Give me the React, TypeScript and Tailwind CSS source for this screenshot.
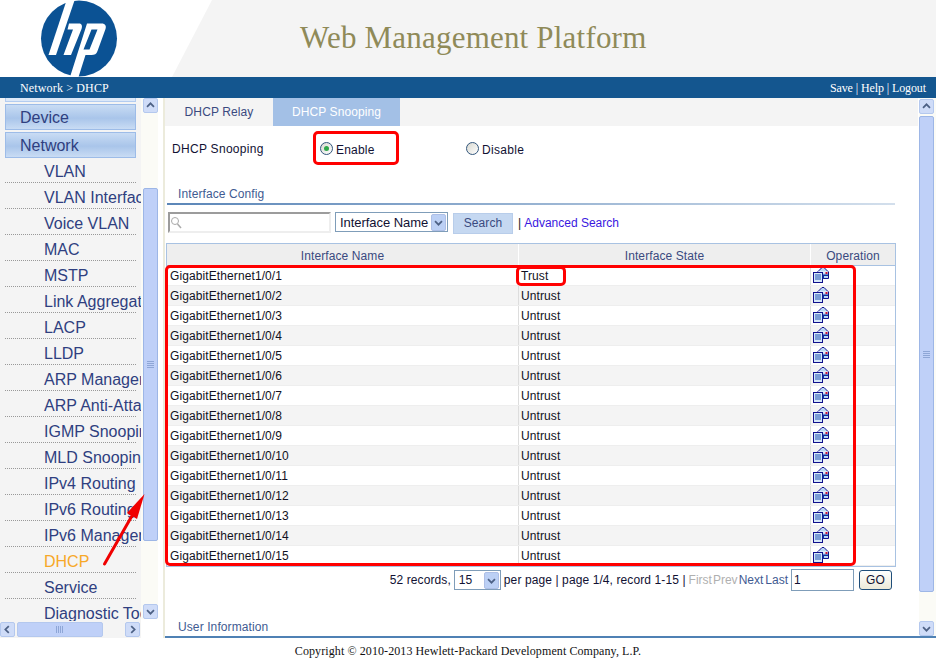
import React from "react";

const sideItems = ["VLAN","VLAN Interface","Voice VLAN","MAC","MSTP","Link Aggregation","LACP","LLDP","ARP Management","ARP Anti-Attack","IGMP Snooping","MLD Snooping","IPv4 Routing","IPv6 Routing","IPv6 Management","DHCP","Service","Diagnostic Tools"];

function Chevron({ dir, size = 15 }: { dir: "up" | "down" | "left" | "right"; size?: number }) {
  const rot = { up: 0, down: 180, left: 270, right: 90 }[dir];
  return (
    <svg width={size} height={size} viewBox="0 0 15 15" style={{ transform: `rotate(${rot}deg)` }}>
      <path d="M3.5 9 L7.5 5 L11.5 9" fill="none" stroke="#4d6185" strokeWidth="2" />
    </svg>
  );
}

function ScrollBtn({ dir }: { dir: "up" | "down" | "left" | "right" }) {
  return (
    <div className="w-[15px] h-[15px] shrink-0 flex items-center justify-center rounded-[2px] border border-[#b4c8ee] bg-[#cfdcf8]">
      <Chevron dir={dir} size={13} />
    </div>
  );
}

function Grip({ vertical }: { vertical?: boolean }) {
  return (
    <div className={vertical ? "flex flex-col gap-px" : "flex gap-px"}>
      {[0, 1, 2, 3].map((i) => (
        <div key={i} className={vertical ? "w-[7px] h-px bg-[#8ea6d6]" : "w-px h-[7px] bg-[#8ea6d6]"} />
      ))}
    </div>
  );
}

function OpIcon() {
  return (
    <svg width="17" height="17" viewBox="0 0 17 17" className="block">
      <path d="M4.5 6 L9 1.5 H11 L15.5 6 V12.5 H4.5 Z" fill="#bcd8f5" stroke="#10108c" strokeWidth="1" />
      <path d="M5 6 H15" stroke="#ffffff" strokeWidth="1" />
      <rect x="0.5" y="6.5" width="9" height="10" fill="#d6e8fa" stroke="#10108c" />
      <path d="M2 9 H8 M2 11 H8 M2 13 H8" stroke="#1f50b0" strokeWidth="1" />
      <path d="M9.5 8.5 H15 V10 H11 V13 H9.5 Z" fill="#0d2f9c" />
      <rect x="12.5" y="6" width="2" height="2" fill="#d01030" />
    </svg>
  );
}

function Radio({ on }: { on?: boolean }) {
  return (
    <div className="w-[13px] h-[13px] rounded-full border border-[#32567c] bg-[linear-gradient(135deg,#d8d8d0,#ffffff)] flex items-center justify-center">
      {on && <div className="w-[5px] h-[5px] rounded-full bg-[#2fa84a]" />}
    </div>
  );
}

function SelectArrow() {
  return (
    <div className="w-[15px] h-[17px] rounded-[2px] bg-[#bcd0f5] border border-[#aebfe6] flex items-center justify-center">
      <Chevron dir="down" size={13} />
    </div>
  );
}

export default function App() {
  const rows = Array.from({ length: 15 }, (_, i) => i + 1);
  return (
    <div className="relative w-[936px] h-[664px] overflow-hidden bg-white flex flex-col font-['Liberation_Sans',Arial,sans-serif] text-[12px] tracking-[0.1px] text-[#111133]">
      {/* header */}
      <header className="relative h-[77px] shrink-0 bg-white flex items-start">
        <div className="absolute inset-0 bg-[#f4f4f4] [clip-path:polygon(212px_0,100%_0,100%_100%,172px_100%)]" />
        <svg width="100" height="77" viewBox="0 0 100 77" className="relative ml-[29px] shrink-0">
          <circle cx="50" cy="38.5" r="38" fill="#0b5294" />
          <path fill="#fff" d="M38 -1 H46 L27 55 H19.5 Z" />
          <path fill="#fff" d="M40 23.5 H50 C53 23.5 53.5 26 52.5 29 L42 55 H34.5 L44 29.5 H38.5 Z" />
          <path fill="#fff" fillRule="evenodd" d="M58 23.5 H72.5 C76.5 23.5 77.5 26 76.5 29 L68.5 51 C67.5 54 65.5 55 62.5 55 H56.5 L49.5 77 H41 Z M62.5 29.5 L54.5 49.5 H60.5 L68.5 29.5 Z" />
        </svg>
        <h1 className="relative ml-[171px] mt-[16px] font-['Liberation_Serif',serif] font-normal text-[31px] leading-[44px] tracking-[0.2px] text-[#8f8a58] whitespace-nowrap">
          Web Management Platform
        </h1>
      </header>

      {/* breadcrumb bar */}
      <div className="h-[21px] shrink-0 bg-[#14568f] flex items-center justify-between pl-[20px] pr-[10px] font-['Liberation_Serif',serif] text-[12px] text-white">
        <span className="tracking-[0.15px]">Network &gt; DHCP</span>
        <span className="tracking-[-0.1px]">Save | Help | Logout</span>
      </div>

      {/* body */}
      <div className="flex h-[540px] shrink-0">
        {/* sidebar */}
        <aside className="w-[141px] shrink-0 bg-[#f4f4f4] flex flex-col">
          <div className="h-[523px] overflow-hidden pl-[5px] text-[16px] tracking-[0px] text-[#2f3f80] whitespace-nowrap">
            <div className="w-[131px] h-[4px] border border-t-0 border-[#b3ccf0] bg-[#dce8f8]" />
            <div className="w-[131px] mt-[2px] h-[26px] border border-[#9dbce8] bg-[linear-gradient(#c9dcf4,#a9c5ea_55%,#c9dcf4)] pl-[14px] leading-[26px]">Device</div>
            <div className="w-[131px] mt-[2px] h-[26px] border border-[#9dbce8] bg-[linear-gradient(#c9dcf4,#a9c5ea_55%,#c9dcf4)] pl-[14px] leading-[26px]">Network</div>
            <div className="-mt-px">
              {sideItems.map((t) => (
                <div key={t} className={`w-[131px] h-[26px] border-b border-dotted border-[#999] pl-[39px] leading-[30px] ${t === "DHCP" ? "text-[#f7a828]" : ""}`}>
                  {t}
                </div>
              ))}
            </div>
          </div>
          <div className="h-[16px] flex items-center justify-between pr-px">
            <ScrollBtn dir="left" />
            <div className="w-[86px] h-[15px] mr-[21px] rounded-[2px] border border-[#b4c8ee] bg-[#bfd0f8] flex items-center justify-center"><Grip /></div>
            <ScrollBtn dir="right" />
          </div>
        </aside>

        {/* sidebar scrollbar */}
        <div className="w-[24px] shrink-0 flex">
          <div className="w-[17px] h-[521px] bg-[#fbfbf6] flex flex-col items-center pl-px">
            <ScrollBtn dir="up" />
            <div className="mt-[75px] w-[15px] h-[353px] rounded-[2px] border border-[#9db6e6] bg-[#bfd0f8] flex items-center justify-center"><Grip vertical /></div>
            <div className="flex-1" />
            <ScrollBtn dir="down" />
          </div>
          <div className="w-[5px] bg-white" />
          <div className="w-[2px] bg-[#ecebdc]" />
        </div>

        {/* main */}
        <main className="flex-1 min-w-0 flex border-b-2 border-[#4f81b4]">
          <div className="w-[753px] h-[538px] overflow-hidden">
            <div className="h-[28px] bg-[#f4f4f4] flex items-stretch">
              <div className="w-[108px] flex items-center justify-center text-[#3a4a80]">DHCP Relay</div>
              <div className="w-[127px] bg-[#a3c0e6] flex items-center justify-center text-white">DHCP Snooping</div>
            </div>
            <div className="h-[50px] flex items-start">
              <span className="ml-[7px] mt-[14px] w-[148px] tracking-[0.3px]">DHCP Snooping</span>
              <div className="mt-[16px] w-[146px] flex items-start gap-[3px]">
                <Radio on />
                <span className="mt-[-1px] tracking-[0.2px]">Enable</span>
              </div>
              <div className="mt-[16px] flex items-start gap-[3px]">
                <Radio />
                <span className="mt-[-1px] tracking-[0.3px]">Disable</span>
              </div>
            </div>
            <div className="ml-[13px] mt-[11px] h-[15px] leading-[15px] text-[#3f5b92]">Interface Config</div>
            <div className="ml-[2px] mt-[1px] w-[728px] h-[2px] bg-[linear-gradient(90deg,#5b86b8,#d3dfec)]" />

            <div className="ml-[3px] mt-[5px] h-[24px] flex items-center">
              <div className="w-[163px] h-[21px] border-2 border-[#9c9c9c] border-r-[#eeeeee] border-b-[#eeeeee] bg-white flex items-center">
                <svg width="12" height="13" viewBox="0 0 12 13"><circle cx="5" cy="5" r="3.5" fill="none" stroke="#aaa" /><path d="M7.5 8 L11 12" stroke="#aaa" strokeWidth="1.5" /></svg>
              </div>
              <div className="ml-[4px] w-[113px] h-[20px] border border-[#7f9db9] flex items-center justify-between pl-[4px] pr-px">
                <span className="mt-px text-[13px] tracking-[-0.05px] whitespace-nowrap">Interface Name</span>
                <SelectArrow />
              </div>
              <div className="ml-[5px] mt-[2px] w-[60px] h-[21px] bg-[#c5d8f1] border border-[#b8cdea] flex items-center justify-center text-[#3a4a80]">Search</div>
              <span className="ml-[5px] mt-[2px] text-[#222]">|</span>
              <span className="ml-[3px] mt-[2px] tracking-[0px] text-[#3a18e0]">Advanced Search</span>
            </div>

            <div className="ml-px mt-[9px] w-[730px] border border-[#a8c2e2] border-t">
              <div className="h-[22px] bg-[#eeeeee] flex text-center leading-[24px] text-[#3a4a80] border-b border-[#a8c2e2]">
                <div className="w-[352px] border-r border-white">Interface Name</div>
                <div className="w-[292px] border-r border-white">Interface State</div>
                <div className="flex-1">Operation</div>
              </div>
              {rows.map((n) => (
                <div key={n} className={`h-[20px] flex border-b border-[#eeeeee] leading-[20px] ${n % 2 === 0 ? "bg-[#f4f4f4]" : "bg-white"}`}>
                  <div className="w-[352px] pl-[3px] border-r border-[#dddddd] text-[#111122]">GigabitEthernet1/0/{n}</div>
                  <div className="w-[292px] pl-[2px] border-r border-[#dddddd] text-[#111122]">{n === 1 ? "Trust" : "Untrust"}</div>
                  <div className="flex-1 pl-[2px]"><OpIcon /></div>
                </div>
              ))}
            </div>

            <div className="mt-px h-[24px] w-[727px] flex items-center justify-end">
              <span>52 records,</span>
              <div className="ml-[3px] w-[47px] h-[20px] border border-[#7f9db9] flex items-center justify-between pl-[4px] pr-px">
                <span>15</span>
                <SelectArrow />
              </div>
              <span className="ml-[3px]">per page | page 1/4, record 1-15 |</span>
              <span className="ml-[3px] text-[#b0b0b0] tracking-[0px]">First</span>
              <span className="ml-[1px] text-[#b0b0b0] tracking-[0px]">Prev</span>
              <span className="ml-[1px] text-[#3f5b92] tracking-[0px]">Next</span>
              <span className="ml-[2px] text-[#3f5b92] tracking-[0px]">Last</span>
              <div className="ml-[3px] w-[63px] h-[22px] border border-[#7f9db9] pl-[2px] leading-[20px]">1</div>
              <div className="ml-[5px] w-[33px] h-[20px] rounded-[3px] border border-[#1f4e7a] bg-[linear-gradient(#ffffff,#ece9d8)] flex items-center justify-center">GO</div>
            </div>

            <div className="ml-[13px] mt-[26px] text-[#3f5b92]">User Information</div>
          </div>

          <div className="ml-px flex-1 h-[538px] bg-[#fbfbf6] flex flex-col pt-px pr-px">
            <ScrollBtn dir="up" />
            <div className="mt-[2px] w-[15px] h-[476px] rounded-[2px] border border-[#9db6e6] bg-[#bfd0f8] flex items-center justify-center"><Grip vertical /></div>
            <div className="flex-1" />
            <ScrollBtn dir="down" />
          </div>
        </main>
      </div>

      {/* footer */}
      <footer className="h-[26px] shrink-0 flex items-center justify-center font-['Liberation_Serif',serif] text-[12px] tracking-[0.09px] text-[#111]">
        Copyright © 2010-2013 Hewlett-Packard Development Company, L.P.
      </footer>

      {/* annotations */}
      <div className="absolute left-[313px] top-[131px] w-[86px] h-[34px] rounded-[5px] border-[3px] border-[#ff0000]" />
      <div className="absolute left-[165px] top-[265px] w-[691px] h-[301px] rounded-[5px] border-[3px] border-[#ff0000]" />
      <div className="absolute left-[516px] top-[266px] w-[50px] h-[20px] rounded-[5px] border-[3px] border-[#ff0000]" />
      <svg className="absolute left-0 top-0 pointer-events-none" width="936" height="664">
        <path d="M104.5 564 L133 514" stroke="#f00000" strokeWidth="3" strokeLinecap="round" />
        <path d="M144.5 494 L127 513 L137 519 Z" fill="#f00000" />
      </svg>
    </div>
  );
}
